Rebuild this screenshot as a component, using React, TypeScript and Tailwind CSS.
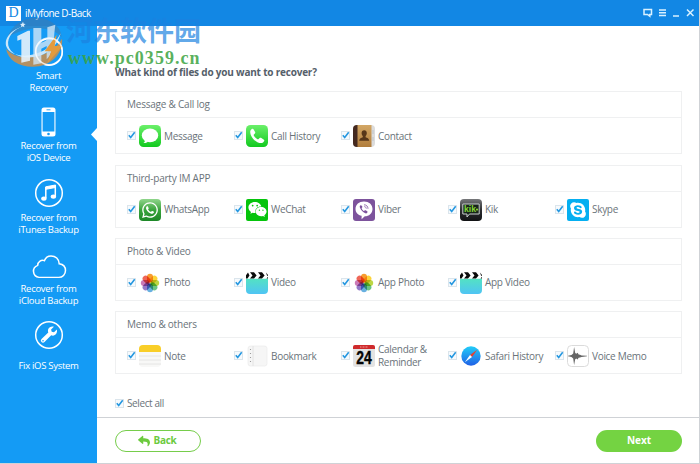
import React from 'react';
import { FaReply, FaSkype, FaWeixin, FaWhatsapp } from 'react-icons/fa';

interface FileType {
  label: string;
  icon: React.ReactNode;
  className?: string;
}

interface FileGroup {
  title: string;
  className: string;
  textClass: string;
  items: FileType[];
}

const PETALS = ['#f7941d', '#fcd12a', '#b5d334', '#5cbf7a', '#5aa9dd', '#8a6fc4', '#c76fb0', '#ee5a4a'];

const CheckBox = () => (
  <svg viewBox="0 0 9 9" className="size-[9px] shrink-0">
    <rect x="0.5" y="0.5" width="8" height="8" fill="#f6fafd" stroke="#dbe5ec" />
    <path d="M1.8 4.2 3.7 6.4 7.7 1.3" fill="none" stroke="#2497e0" strokeWidth="1.6" />
  </svg>
);

const MessageIcon = () => (
  <svg viewBox="0 0 22 22" className="size-[22px]">
    <defs>
      <linearGradient id="green" x1="0" y1="0" x2="0" y2="1">
        <stop offset="0" stopColor="#6bf06a" />
        <stop offset="1" stopColor="#12c91f" />
      </linearGradient>
    </defs>
    <rect width="22" height="22" rx="4.5" fill="url(#green)" />
    <ellipse cx="11" cy="10.4" rx="8.2" ry="6.9" fill="#fff" />
    <path d="M6 15c0 1.600-.7 2.500-1.600 3.100 2 .1 3.600-.6 4.600-1.700z" fill="#fff" />
  </svg>
);

const CallIcon = () => (
  <svg viewBox="0 0 22 22" className="size-[22px]">
    <rect width="22" height="22" rx="4.5" fill="url(#green)" />
    <path
      d="M6.200 3.800c-1 .6-2 1.700-2 3 0 5.300 5.700 11.300 11 11.300 1.300 0 2.400-1 3-2.100.2-.5.100-.9-.3-1.200l-2.900-2c-.5-.3-1-.2-1.400.2l-1 1.100c-.3.3-.7.300-1.100.1-1.500-.8-2.900-2.200-3.700-3.700-.2-.4-.2-.8.1-1.100l1-1c.4-.4.500-.9.200-1.400L7.500 4.200c-.3-.5-.8-.700-1.300-.4z"
      fill="#fff"
    />
  </svg>
);

const ContactIcon = () => (
  <svg viewBox="0 0 22 22" className="size-[22px]">
    <defs>
      <linearGradient id="tan" x1="0" y1="0" x2="0" y2="1">
        <stop offset="0" stopColor="#d3a765" />
        <stop offset="1" stopColor="#b17d3c" />
      </linearGradient>
    </defs>
    <rect width="22" height="22" rx="4" fill="#dcdcdc" />
    <path d="M4 0h14.500v22H4z" fill="url(#tan)" />
    <path d="M4.500 0v22H4a4 4 0 0 1-4-4V4a4 4 0 0 1 4-4z" fill="#44291f" />
    <path d="M20 5v4M20 12v4" stroke="#bfc4c9" strokeWidth="1" />
    <path d="M11.200 5.200c1.700 0 2.600 1.200 2.600 2.900 0 1.300-.5 2.300-1.200 2.900v1.300c1.600.6 3.400 1 3.600 3.500H6.200c.2-2.500 2-2.900 3.600-3.500V11c-.7-.6-1.200-1.600-1.200-2.900 0-1.700.9-2.900 2.600-2.900z" fill="#573619" />
  </svg>
);

const WhatsAppIcon = () => (
  <div className="flex size-[22px] items-center justify-center rounded-[4px] bg-gradient-to-b from-[#8fd58b] via-[#38a43c] to-[#1c8727]">
    <FaWhatsapp className="size-[18px] text-white" />
  </div>
);

const WeChatIcon = () => (
  <div className="flex size-[22px] items-center justify-center rounded-[2px] bg-[#05c40c]">
    <FaWeixin className="size-[19px] text-white" />
  </div>
);

const ViberIcon = () => (
  <div className="flex size-[22px] items-center justify-center rounded-[3px] bg-[#7d539c]">
    <svg viewBox="0 0 22 22" className="size-[22px]">
      <path d="M11 2.500c5 0 8.500 3 8.500 7.500S16 17.300 11.800 17.300L8.600 20.300v-3.500C5 16 2.500 13.800 2.500 10 2.500 5.500 6 2.500 11 2.500z" fill="#fff" />
      <path d="M7.600 6.300c-1 .6-1 1.500-.6 2.500 1 2.400 2.800 4.400 5.300 5.500.8.300 1.500.1 2.100-.8.300-.5.200-.9-.2-1.200l-1.500-1c-.4-.2-.8-.1-1.100.3-.4.500-.8.400-1.200.1-.9-.6-1.400-1.300-1.700-2.200-.1-.4 0-.6.400-.9.400-.3.400-.7.200-1L8.400 6.500c-.2-.3-.5-.4-.8-.2z" fill="#7d539c" />
      <path d="M11 5.800c2.500 0 4 1.600 4 4M11.300 7.600c1.200.1 1.900.8 2 2" fill="none" stroke="#7d539c" strokeWidth=".8" />
    </svg>
  </div>
);

const KikIcon = () => (
  <svg viewBox="0 0 22 22" className="size-[22px]">
    <defs>
      <linearGradient id="dark" x1="0" y1="0" x2="0" y2="1">
        <stop offset="0" stopColor="#77787b" />
        <stop offset=".5" stopColor="#2c2d30" />
        <stop offset="1" stopColor="#111214" />
      </linearGradient>
    </defs>
    <rect width="22" height="22" rx="4" fill="url(#dark)" />
    <path d="M2.800 5h16.400v10H9.500L7 18v-3H2.800z" fill="#17241a" stroke="#c9cfcf" strokeWidth="1" strokeLinejoin="round" />
    <text x="4" y="13.300" fontSize="9.500" fontWeight="bold" fontFamily="Liberation Sans, sans-serif" textLength="12" lengthAdjust="spacingAndGlyphs" fill="#84d436">kik</text>
    <circle cx="17" cy="10.600" r="1.100" fill="#84d436" />
  </svg>
);

const SkypeIcon = () => (
  <div className="flex size-[22px] items-center justify-center rounded-[2px] bg-[#05aff1]">
    <FaSkype className="size-[18px] text-white" />
  </div>
);

const PhotoIcon = () => (
  <svg viewBox="0 0 22 22" className="size-[22px] isolate">
    {PETALS.map((color, i) => (
      <rect
        key={color}
        x="8"
        y="1.800"
        width="6"
        height="8.700"
        rx="3"
        fill={color}
        opacity=".92"
        transform={`rotate(${i * 45} 11 11)`}
        className="mix-blend-multiply"
      />
    ))}
  </svg>
);

const VideoIcon = () => (
  <svg viewBox="0 0 22 22" className="size-[22px]">
    <defs>
      <linearGradient id="aqua" x1="0" y1="0" x2="0" y2="1">
        <stop offset="0" stopColor="#53e2c3" />
        <stop offset="1" stopColor="#4fc4f4" />
      </linearGradient>
    </defs>
    <path d="M0 6.800h22V18a4 4 0 0 1-4 4H4a4 4 0 0 1-4-4z" fill="url(#aqua)" />
    <path d="M0 6.600V3.200L2 .5l1.500 2.900L1.500 6.600zM4 .2h4l2.600 3.200L8 6.600H4l2.500-3.200zM12 .2h4l2.600 3.200L16 6.600h-4l2.500-3.200zM20 .4 22 3v1l-1-.5zM20.500 6.600l1.500-1.800v1.800z" fill="#0a0a0a" />
  </svg>
);

const NoteIcon = () => (
  <svg viewBox="0 0 22 22" className="size-[22px]">
    <path d="M0 6.500h22V18a4 4 0 0 1-4 4H4a4 4 0 0 1-4-4z" fill="#f8f8f7" />
    <path d="M0 7V4a4 4 0 0 1 4-4h14a4 4 0 0 1 4 4v3z" fill="#f9ce28" />
    <path d="M0 11h22M0 15h22M0 19h22" stroke="#dfdfdf" strokeWidth=".8" />
  </svg>
);

const BookmarkIcon = () => (
  <svg viewBox="0 0 22 22" className="size-[22px]">
    <rect x="2" y="1" width="19" height="20" rx="2.500" fill="#f6f6f6" stroke="#ebebeb" strokeWidth=".7" />
    <path d="M7 1v20" stroke="#e0e0e0" strokeWidth=".8" />
    <path d="M4.500 4v15" stroke="#9d9d9d" strokeWidth="1.100" strokeDasharray="1 3" />
  </svg>
);

const CalendarIcon = () => (
  <svg viewBox="0 0 22 22" className="size-[22px]">
    <rect width="22" height="22" rx="2.500" fill="#e3e3e3" />
    <path d="M0 4V2a2 2 0 0 1 2-2h18a2 2 0 0 1 2 2v2z" fill="#cf2a2c" />
    <path d="M7 2h8" stroke="#eb9a98" strokeWidth="1" strokeDasharray="1 .5" />
    <text x="3.200" y="18.600" fontSize="18" fontWeight="bold" fontFamily="Liberation Sans Narrow, Liberation Sans, sans-serif" textLength="15.500" lengthAdjust="spacingAndGlyphs" fill="#050505" stroke="#050505" strokeWidth=".4">24</text>
  </svg>
);

const SafariIcon = () => (
  <svg viewBox="0 0 22 22" className="size-[22px]">
    <defs>
      <linearGradient id="sky" x1="0" y1="0" x2="0" y2="1">
        <stop offset="0" stopColor="#22cdf8" />
        <stop offset="1" stopColor="#2060e6" />
      </linearGradient>
    </defs>
    <circle cx="11" cy="11" r="9.700" fill="url(#sky)" />
    <path d="M17.200 4.700 12 12 10 10z" fill="#e8402f" />
    <path d="M4.800 17.300 10 10l2 2z" fill="#fff" />
  </svg>
);

const VoiceIcon = () => (
  <svg viewBox="0 0 22 22" className="size-[22px]">
    <rect x=".5" y=".5" width="21" height="21" rx="4" fill="#fff" stroke="#dbdbdb" />
    <path d="M1 10.700 4.500 9.900l1.700-1.500.9-6.400 1.100 6 1.100.8 1.300-1 1 1.600 1.400.3 1.600.7L20 10.700v.600l-5.400.7-1.600.5-1.400.3-1 1.600-1.300-1-1.100.8L7.100 20l-.9-6.400-1.700-1.500L1 11.300z" fill="#666" />
  </svg>
);

const GROUPS: FileGroup[] = [
  {
    title: 'Message & Call log',
    className: 'mt-[11px]',
    textClass: 'pt-px',
    items: [
      { label: 'Message', icon: <MessageIcon /> },
      { label: 'Call History', icon: <CallIcon /> },
      { label: 'Contact', icon: <ContactIcon /> },
    ],
  },
  {
    title: 'Third-party IM APP',
    className: 'mt-[11px]',
    textClass: 'pb-px',
    items: [
      { label: 'WhatsApp', icon: <WhatsAppIcon /> },
      { label: 'WeChat', icon: <WeChatIcon /> },
      { label: 'Viber', icon: <ViberIcon /> },
      { label: 'Kik', icon: <KikIcon /> },
      { label: 'Skype', icon: <SkypeIcon /> },
    ],
  },
  {
    title: 'Photo & Video',
    className: 'mt-[10px]',
    textClass: 'pb-px',
    items: [
      { label: 'Photo', icon: <PhotoIcon /> },
      { label: 'Video', icon: <VideoIcon /> },
      { label: 'App Photo', icon: <PhotoIcon /> },
      { label: 'App Video', icon: <VideoIcon /> },
    ],
  },
  {
    title: 'Memo & others',
    className: 'mt-[10px]',
    textClass: 'pt-px',
    items: [
      { label: 'Note', icon: <NoteIcon /> },
      { label: 'Bookmark', icon: <BookmarkIcon /> },
      { label: 'Calendar & Reminder', icon: <CalendarIcon />, className: 'w-[54px]' },
      { label: 'Safari History', icon: <SafariIcon /> },
      { label: 'Voice Memo', icon: <VoiceIcon /> },
    ],
  },
];

const SmartIcon = () => (
  <svg viewBox="0 0 30 30" className="size-[30px]" fill="none">
    <circle cx="15" cy="15" r="13.300" stroke="#fff" strokeWidth="1.500" />
  </svg>
);

const PhoneIcon = () => (
  <svg viewBox="0 0 15 30" className="h-[30px] w-[15px]">
    <rect x=".5" y=".5" width="14" height="29" rx="2.500" fill="#fff" />
    <rect x="1.600" y="5" width="11.800" height="19.500" fill="#149bf5" />
    <path d="M5.500 2.800h4" stroke="#149bf5" strokeWidth=".9" />
    <circle cx="7.500" cy="27" r="1.300" fill="#149bf5" />
  </svg>
);

const MusicIcon = () => (
  <svg viewBox="0 0 30 30" className="size-[30px]" fill="none">
    <circle cx="15" cy="15" r="13.300" stroke="#fff" strokeWidth="1.500" />
    <path d="M11.700 8.800 21.500 7v2.500l-9.800 1.800z" fill="#fff" stroke="#fff" />
    <path d="M11.800 9v11M21.300 7v11" stroke="#fff" strokeWidth="1.500" />
    <ellipse cx="9.900" cy="20.600" rx="2.700" ry="2.200" fill="#fff" />
    <ellipse cx="19.400" cy="18.600" rx="2.700" ry="2.200" fill="#fff" />
  </svg>
);

const CloudIcon = () => (
  <svg viewBox="0 0 36 26" preserveAspectRatio="none" className="mb-[1px] h-[25px] w-[36px]" fill="none">
    <path d="M8 24.300a6.500 6.500 0 0 1-1.300-12.500c.1-4 3.800-6.300 6.700-4.800C14.500 3.800 17 2 20 2c4.600 0 8 3.300 8.200 8.200 4 .6 6.300 3.500 6.300 7 0 4-3 7.100-6.700 7.100z" stroke="#fff" strokeWidth="1.500" />
  </svg>
);

const WrenchIcon = () => (
  <svg viewBox="0 0 30 30" className="size-[30px]" fill="none">
    <circle cx="15" cy="15" r="13.300" stroke="#fff" strokeWidth="1.500" />
    <path d="M22.800 9.600 20 12.300l-2.300-.6-.6-2.300 2.800-2.700c-2.300-.7-4.700.2-5.600 2.300-.5 1.200-.4 2.400 0 3.500l-6.800 6.600a2.100 2.100 0 0 0 3 3l6.700-6.800c3.500 1.400 6.800-1.800 5.600-5.700z" fill="#fff" />
    <circle cx="9" cy="20.700" r=".8" fill="#149bf5" />
  </svg>
);

const NAV = [
  { lines: ['Smart', 'Recovery'], icon: <SmartIcon />, className: 'h-[70px]', text: 'mt-[3px]' },
  { lines: ['Recover from', 'iOS Device'], icon: <PhoneIcon />, className: 'h-[71px]', text: 'mt-[3px]' },
  { lines: ['Recover from', 'iTunes Backup'], icon: <MusicIcon />, className: 'h-[76px]', text: 'mt-[4px]' },
  { lines: ['Recover from', 'iCloud Backup'], icon: <CloudIcon />, className: 'h-[66px]', text: 'mt-[3px]' },
  { lines: ['Fix iOS System'], icon: <WrenchIcon />, className: 'h-[60px]', text: 'mt-[10px]' },
];

const Watermark = () => (
  <div className="pointer-events-none absolute left-0 top-0 flex">
    <svg viewBox="0 0 198 210" className="h-[70px] w-[66px]">
      {/* dome behind the ring */}
      <path d="M22 112C44 48 130 34 172 80c8 9 12 20 13 32-24-30-90-42-163 0z" fill="#3f7cae" opacity=".55" />
      <path d="M18 146c12 12 24 20 44 24 50 8 100-12 124-54 4 46-34 84-88 84-42 0-74-20-80-54z" fill="#c18f55" opacity=".92" />
      {/* ring */}
      <path d="M76 78C30 88 10 118 20 142c18 40 122 36 162-42-14 54-62 76-106 72-40-4-58-30-50-54 6-20 24-34 50-40z" fill="#deeffb" opacity=".9" />
      <path d="m52 108 32-16h6v90l-26 6v-70l-12 4z" fill="#e6f2fb" opacity=".9" />
      <path d="M100 84h24v44c8-2 14-6 18-10V82l24-8c-2 16-4 32-4 48-6 28-10 44-22 56v-40l-16 8v44l-24 4z" fill="#cfe5f6" opacity=".8" />
      <path d="m170 104-36 50h20l-12 36 46-52h-24z" fill="#e39b3e" />
      <path d="m69 65 2 6 6 1-5 4 1 6-5-3-5 3 1-6-4-4 6-1z" fill="#d9ecfa" />
      <circle cx="147" cy="154" r="40" fill="none" stroke="#fff" strokeWidth="4.500" opacity=".75" />
    </svg>
    <div className="whitespace-nowrap pt-[14px]">
      <p className="h-[33px] font-['Noto_Sans_CJK_SC',sans-serif] text-[27px] font-bold leading-[32px] text-[#1c82e0]/70">河东软件园</p>
      <p className="ml-[2px] font-['Liberation_Serif',serif] text-[18px] font-bold leading-[22px] tracking-[1.05px] text-[#3ba33f]/85">www.pc0359.cn</p>
    </div>
  </div>
);

export default function App() {
  return (
    <div className="relative flex h-[464px] w-[700px] flex-col overflow-hidden border-b border-r border-[#cfd2d6] bg-white font-['Open_Sans','Noto_Sans',sans-serif] text-[#6a737a]">
      <header className="flex h-[26px] shrink-0 items-center bg-[#1287e4] pl-[6px] pr-[4px] text-white">
        <span className="flex h-[15px] w-[15px] items-center justify-center bg-white font-['Liberation_Serif',serif] text-[14px] leading-none text-[#1287e4]">D</span>
        <span className="ml-[4px] pt-px text-[10px] tracking-[-0.5px]">iMyfone D-Back</span>
        <svg viewBox="0 0 52 12" className="ml-auto h-[12px] w-[52px]" fill="none" stroke="#d9f1ff" strokeWidth="1.500">
          <path d="M1 2.500h7.500v5H6.800v1.800L4.500 7.500H1z" />
          <path d="M16 3h7M16 5.700h7M16 8.400h7" />
          <path d="M30 9h6" />
          <path d="m44 2.500 6.500 6.500M50.500 2.500 44 9" />
        </svg>
      </header>

      <div className="flex min-h-0 flex-1">
        <aside className="relative w-[97px] shrink-0 bg-[#149bf5] pt-[11px] text-white">
          {NAV.map((item) => (
            <div key={item.lines.join()} className={`flex flex-col items-center ${item.className}`}>
              {item.icon}
              <div className={`text-center text-[9.5px] leading-[12px] tracking-[-0.3px] ${item.text}`}>
                {item.lines.map((line) => (
                  <p key={line} className="whitespace-nowrap">{line}</p>
                ))}
              </div>
            </div>
          ))}
          {/* Active item pointer */}
          <svg viewBox="0 0 6 13" className="absolute right-0 top-[102px] h-[13px] w-[6px]">
            <path d="M6 0v13L0 6.500z" fill="#fff" />
          </svg>
        </aside>

        <main className="flex flex-1 flex-col">
          <div className="h-[392px] shrink-0 border-b border-[#cfd2d6] pl-[18px] pr-[17px] pt-[38px]">
            <h1 className="h-[16px] text-[10px] font-bold leading-[16px] tracking-[-0.2px] text-[#55606a]">What kind of files do you want to recover?</h1>
            {GROUPS.map((group) => (
              <section key={group.title} className={`h-[63px] border border-[#eff0f1] ${group.className}`}>
                <h2 className="h-[26px] border-b border-[#eff0f1] pl-[11px] text-[10px] leading-[25px] tracking-[-0.22px]">{group.title}</h2>
                <div className="flex h-[35px] items-center pl-[11px]">
                  {group.items.map((item) => (
                    <label key={item.label} className="flex w-[107px] shrink-0 items-center">
                      <CheckBox />
                      <span className="ml-[3px] shrink-0">{item.icon}</span>
                      <span className={`ml-[3px] text-[10px] leading-[13px] tracking-[-0.3px] ${group.textClass} ${item.className ?? 'whitespace-nowrap'}`}>{item.label}</span>
                    </label>
                  ))}
                </div>
              </section>
            ))}
            <label className="mt-[22px] flex items-center text-[10px] leading-[14px]">
              <CheckBox />
              <span className="ml-[3px] tracking-[-0.4px]">Select all</span>
            </label>
          </div>
          <footer className="flex flex-1 items-center justify-between pl-[18px] pr-[17px]">
            <button className="flex h-[22px] w-[86px] items-center justify-center gap-[4px] rounded-full border border-[#76cd4b] pr-[2px] text-[10px] font-bold tracking-[-0.3px] text-[#6cca3e]">
              <FaReply className="size-[12px]" />
              Back
            </button>
            <button className="h-[22px] w-[86px] rounded-full bg-[#74d342] text-[10px] font-bold text-white">Next</button>
          </footer>
        </main>
      </div>
      <Watermark />
    </div>
  );
}
